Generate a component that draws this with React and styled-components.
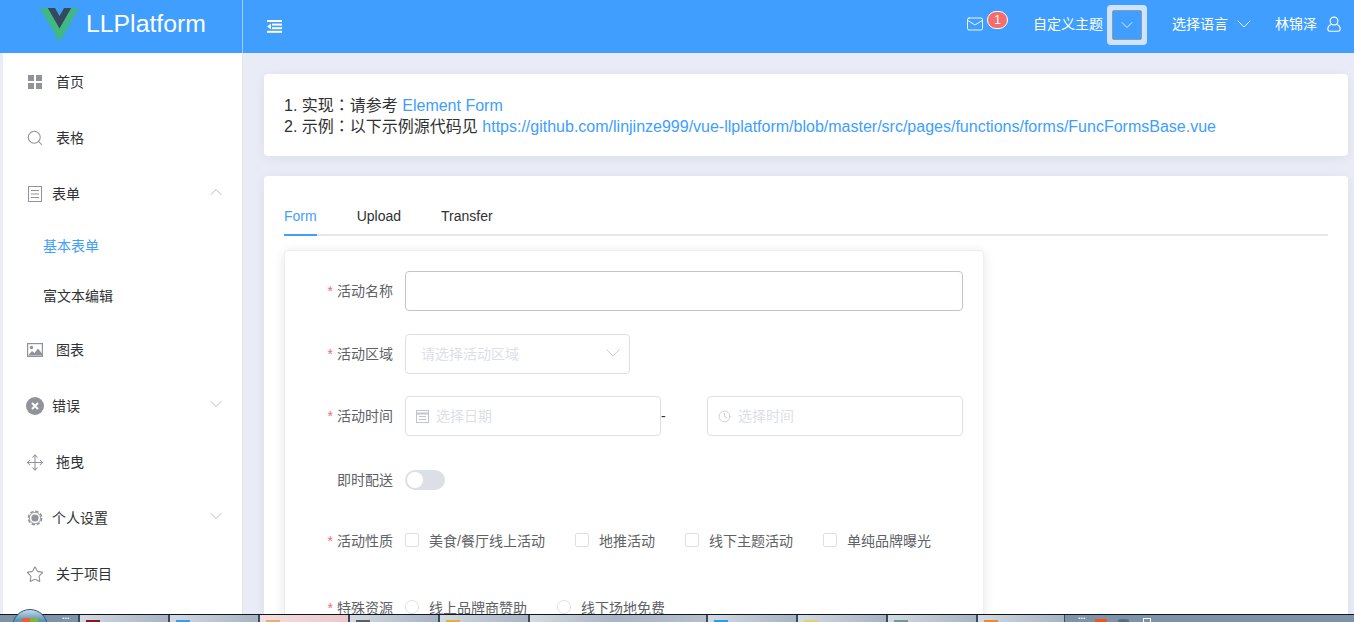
import React from 'react';
import styled, { createGlobalStyle } from 'styled-components';
import { ChevronDown, ChevronUp, Clock, Mail, Move, Search, Star } from 'lucide-react';

const GlobalStyle = createGlobalStyle`
  html, body {
    margin: 0;
    height: 100%;
    overflow: hidden;
  }
  body {
    font-family: "Liberation Sans", "Noto Sans CJK SC", sans-serif;
    font-size: 14px;
    color: #303133;
  }
  * {
    box-sizing: border-box;
  }
`;

const VueLogo = () => (
  <svg width="39" height="34" viewBox="0 0 261.76 226.69">
    <path fill="#41b883" d="M161.096.001l-30.225 52.351L100.647.001H-.005l130.876 226.688L261.747.001z" />
    <path fill="#35495e" d="M161.096.001l-30.225 52.351L100.647.001H52.346l78.525 136.01L209.398.001z" />
  </svg>
);

const FoldIcon = () => (
  <svg width="15" height="13" viewBox="0 0 15 13" fill="#fff">
    <rect x="0" y="0" width="15" height="2" />
    <rect x="5" y="3.6" width="10" height="2" />
    <rect x="5" y="7.2" width="10" height="2" />
    <rect x="0" y="10.8" width="15" height="2" />
    <path d="M4 3.4v6L0 6.4z" />
  </svg>
);

const UserIcon = () => (
  <svg width="14" height="16" viewBox="0 0 14 16" fill="none" stroke="#fff" strokeWidth="1.1">
    <circle cx="7" cy="5" r="3.9" />
    <path d="M4.6 8.2C2.4 9 .8 10.6.8 13c0 1.3.8 2.2 2.2 2.2h8c1.4 0 2.2-.9 2.2-2.2 0-2.4-1.6-4-3.8-4.8" />
  </svg>
);

const GridIcon = () => (
  <svg width="14" height="14" viewBox="0 0 14 14" fill="#909399">
    <rect width="6" height="6" />
    <rect x="8" width="6" height="6" />
    <rect y="8" width="6" height="6" />
    <rect x="8" y="8" width="6" height="6" />
  </svg>
);

const TicketIcon = () => (
  <svg width="14" height="16" viewBox="0 0 14 16" fill="none" stroke="#909399">
    <rect x="0.5" y="0.5" width="13" height="15" />
    <path d="M3 4.5h8M3 8h8M3 11.5h8" />
  </svg>
);

const PictureIcon = () => (
  <svg width="16" height="14" viewBox="0 0 16 14">
    <rect width="16" height="14" fill="#909399" />
    <rect x="1.2" y="1.2" width="13.6" height="11.6" fill="#fff" />
    <circle cx="4.5" cy="4.5" r="1.7" fill="#909399" />
    <path fill="#909399" d="M1 12.5l4-4.5 2.5 2 3.5-4.5 4 5v2z" />
  </svg>
);

const ErrorIcon = () => (
  <svg width="18" height="18" viewBox="0 0 18 18">
    <circle cx="9" cy="9" r="9" fill="#909399" />
    <path d="M6 6l6 6M12 6l-6 6" stroke="#fff" strokeWidth="2" />
  </svg>
);

const GearIcon = () => (
  <svg width="16" height="16" viewBox="0 0 16 16">
    <circle cx="8" cy="8" r="6.6" fill="none" stroke="#909399" strokeWidth="1.6" strokeDasharray="3.4 1.8" />
    <circle cx="8" cy="8" r="5.6" fill="none" stroke="#909399" strokeWidth="0.8" />
    <circle cx="8" cy="8" r="3.6" fill="#909399" />
  </svg>
);

const CalendarIcon = () => (
  <svg width="13" height="13" viewBox="0 0 13 13" fill="none" stroke="#c0c4cc">
    <rect x="0.5" y="0.5" width="12" height="12" />
    <path d="M0.5 3.5h12" strokeWidth="2" />
    <path d="M3 6.5h7M3 9.5h7" />
  </svg>
);

const App = () => (
  <Page>
    <GlobalStyle />
    <Header>
      <Brand>
        <VueLogo />
        <BrandName>LLPlatform</BrandName>
      </Brand>
      <FoldButton>
        <FoldIcon />
      </FoldButton>
      <HeaderRight>
        <MailWrap>
          <Mail size={18} strokeWidth={1.2} />
          <Badge>1</Badge>
        </MailWrap>
        <HeaderText>自定义主题</HeaderText>
        <ThemeSwatch>
          <SwatchInner>
            <ChevronDown size={20} strokeWidth={1} />
          </SwatchInner>
        </ThemeSwatch>
        <LangWrap>
          <HeaderText>选择语言</HeaderText>
          <ChevronDown size={24} strokeWidth={0.9} />
        </LangWrap>
        <UserWrap>
          <HeaderText>林锦泽</HeaderText>
          <UserIcon />
        </UserWrap>
      </HeaderRight>
    </Header>

    <Body>
      <Sidebar>
        <MenuRow>
          <IconSlot><GridIcon /></IconSlot>
          <MenuLabel>首页</MenuLabel>
        </MenuRow>
        <MenuRow>
          <IconSlot><Search size={22} strokeWidth={1.4} color="#909399" /></IconSlot>
          <MenuLabel>表格</MenuLabel>
        </MenuRow>
        <MenuRow>
          <IconSlot><TicketIcon /></IconSlot>
          <MenuLabel $nested>表单</MenuLabel>
          <Arrow><ChevronUp size={20} strokeWidth={1} /></Arrow>
        </MenuRow>
        <SubRow $active>基本表单</SubRow>
        <SubRow>富文本编辑</SubRow>
        <MenuRow>
          <IconSlot><PictureIcon /></IconSlot>
          <MenuLabel>图表</MenuLabel>
        </MenuRow>
        <MenuRow>
          <IconSlot><ErrorIcon /></IconSlot>
          <MenuLabel $nested>错误</MenuLabel>
          <Arrow><ChevronDown size={20} strokeWidth={1} /></Arrow>
        </MenuRow>
        <MenuRow>
          <IconSlot><Move size={19} strokeWidth={1.4} color="#909399" /></IconSlot>
          <MenuLabel>拖曳</MenuLabel>
        </MenuRow>
        <MenuRow>
          <IconSlot><GearIcon /></IconSlot>
          <MenuLabel $nested>个人设置</MenuLabel>
          <Arrow><ChevronDown size={20} strokeWidth={1} /></Arrow>
        </MenuRow>
        <MenuRow>
          <IconSlot><Star size={19} strokeWidth={1.5} color="#909399" /></IconSlot>
          <MenuLabel>关于项目</MenuLabel>
        </MenuRow>
      </Sidebar>

      <Main>
        <NoteCard>
          <div>1. 实现<FullColon>：</FullColon>请参考 <NoteLink>Element Form</NoteLink></div>
          <div>
            2. 示例<FullColon>：</FullColon>以下示例源代码见{' '}
            <NoteLink>https://github.com/linjinze999/vue-llplatform/blob/master/src/pages/functions/forms/FuncFormsBase.vue</NoteLink>
          </div>
        </NoteCard>

        <TabCard>
          <TabBar>
            <Tab $active>Form</Tab>
            <Tab>Upload</Tab>
            <Tab>Transfer</Tab>
          </TabBar>
          <FormBox>
            <FormRow $gap={23}>
              <FieldLabel $required>活动名称</FieldLabel>
              <TextInput $focused />
            </FormRow>
            <FormRow $gap={22}>
              <FieldLabel $required>活动区域</FieldLabel>
              <TextInput $width={225}>
                <Placeholder $left={15}>请选择活动区域</Placeholder>
                <SelectArrow><ChevronDown size={24} strokeWidth={0.9} /></SelectArrow>
              </TextInput>
            </FormRow>
            <FormRow $gap={24}>
              <FieldLabel $required>活动时间</FieldLabel>
              <TextInput $width={256}>
                <InputIcon><CalendarIcon /></InputIcon>
                <Placeholder>选择日期</Placeholder>
              </TextInput>
              <Dash>-</Dash>
              <TextInput $width={256}>
                <InputIcon><Clock size={15} strokeWidth={1.4} color="#c0c4cc" /></InputIcon>
                <Placeholder>选择时间</Placeholder>
              </TextInput>
            </FormRow>
            <FormRow $gap={21}>
              <FieldLabel>即时配送</FieldLabel>
              <SwitchTrack><SwitchKnob /></SwitchTrack>
            </FormRow>
            <FormRow $gap={27}>
              <FieldLabel $required>活动性质</FieldLabel>
              <Choice $gap={30}><CheckBox />美食/餐厅线上活动</Choice>
              <Choice $gap={30}><CheckBox />地推活动</Choice>
              <Choice $gap={30}><CheckBox />线下主题活动</Choice>
              <Choice><CheckBox />单纯品牌曝光</Choice>
            </FormRow>
            <FormRow $gap={22}>
              <FieldLabel $required>特殊资源</FieldLabel>
              <Choice $gap={30}><RadioDot />线上品牌商赞助</Choice>
              <Choice><RadioDot />线下场地免费</Choice>
            </FormRow>
          </FormBox>
        </TabCard>
      </Main>
    </Body>

    <Taskbar>
      <StartOrb />
      <TrayDots $left={62}>...</TrayDots>
      <WindowButton $tab="#8a1a1a" />
      <WindowButton $tab="#3d9be0" />
      <WindowButton $tab="#e8b070" $hot />
      <WindowButton $tab="#5a6068" />
      <WindowButton $tab="#e3b040" />
      <WindowButton $split $width={178} />
      <WindowButton $tab="#2f9ae8" />
      <WindowButton $tab="#e6cf6a" />
      <WindowButton $tab="#6f9a98" />
      <WindowButton $tab="#e98a3a" $width={88} />
      <Tray>
        <TrayDots $left={13}>...</TrayDots>
        <TrayFlag />
        <TrayCircle />
        <TraySquare />
      </Tray>
    </Taskbar>
  </Page>
);

export default App;

const Page = styled.div`
  display: flex;
  flex-direction: column;
  height: 622px;
  width: 1354px;
  overflow: hidden;
  background: #e9ecf6;
`;

const Header = styled.header`
  display: flex;
  align-items: center;
  flex: none;
  height: 53px;
  background: #409eff;
  color: #fff;
`;

const Brand = styled.div`
  display: flex;
  align-items: center;
  gap: 7px;
  width: 243px;
  height: 100%;
  padding: 0 0 4px 40px;
  border-right: 1px solid #a9cdf2;
`;

const BrandName = styled.span`
  margin-bottom: 2px;
  font-size: 24.8px;
  line-height: 30px;
`;

const FoldButton = styled.div`
  display: flex;
  margin-left: 24px;
`;

const HeaderRight = styled.div`
  display: flex;
  align-items: center;
  margin-left: auto;
  padding: 0 13px 5px 0;
`;

const MailWrap = styled.div`
  position: relative;
  display: flex;
  margin-right: 49px;
`;

const Badge = styled.span`
  position: absolute;
  top: -4px;
  left: 21px;
  width: 21px;
  height: 18px;
  border: 1px solid #fff;
  border-radius: 9px;
  background: #f56c6c;
  font-size: 12px;
  line-height: 16px;
  text-align: center;
`;

const HeaderText = styled.span`
  font-size: 14px;
  line-height: 20px;
  color: #fff;
`;

const ThemeSwatch = styled.div`
  display: flex;
  width: 40px;
  height: 40px;
  margin: 2px 25px 0 4px;
  padding: 5px;
  border-radius: 4px;
  background: #cfe4fb;
`;

const SwatchInner = styled.div`
  display: flex;
  align-items: center;
  justify-content: center;
  width: 100%;
  border: 1px solid #8f9bab;
  border-radius: 2px;
  background: #409eff;
`;

const LangWrap = styled.div`
  display: flex;
  align-items: center;
  gap: 4px;
  margin-right: 19px;
`;

const UserWrap = styled.div`
  display: flex;
  align-items: center;
  gap: 10px;
`;

const Body = styled.div`
  display: flex;
  flex: 1;
  min-height: 0;
  padding-left: 3px;
`;

const Sidebar = styled.nav`
  flex: none;
  width: 240px;
  padding-top: 1px;
  border-right: 1px solid #e6e6e6;
  background: #fff;
`;

const MenuRow = styled.div`
  display: flex;
  align-items: center;
  height: 56px;
  padding: 0 16px 0 23px;
`;

const IconSlot = styled.span`
  display: flex;
  align-items: center;
  justify-content: center;
  flex: none;
  width: 18px;
`;

const MenuLabel = styled.span`
  margin-left: ${(p) => (p.$nested ? 8 : 12)}px;
  line-height: 20px;
  color: #303133;
`;

const Arrow = styled.span`
  display: flex;
  margin: 0 0 5px auto;
  color: #a8abb2;
`;

const SubRow = styled.div`
  display: flex;
  align-items: center;
  height: 50px;
  margin-top: -2px;
  margin-bottom: 2px;
  padding-left: 40px;
  color: ${(p) => (p.$active ? '#409eff' : '#303133')};
`;

const Main = styled.main`
  flex: 1;
  min-width: 0;
  padding: 21px 6px 0 21px;
`;

const NoteCard = styled.section`
  height: 82px;
  padding: 21px 20px 0;
  border-radius: 4px;
  background: #fff;
  box-shadow: 0 2px 12px rgba(0, 0, 0, 0.06);
  font-size: 16px;
  line-height: 21px;
  color: #303133;
`;

/* the Traditional face centres its full-width colon in the cell */
const FullColon = styled.span`
  font-family: "Noto Sans CJK TC", sans-serif;
  line-height: 0;
`;

const NoteLink = styled.a`
  color: #409eff;
`;

const TabCard = styled.section`
  height: 520px;
  margin-top: 20px;
  padding: 20px;
  border-radius: 4px;
  background: #fff;
  box-shadow: 0 2px 12px rgba(0, 0, 0, 0.06);
`;

const TabBar = styled.div`
  display: flex;
  height: 40px;
  margin-bottom: 14px;
  border-bottom: 2px solid #e4e7ed;
`;

const Tab = styled.div`
  height: 40px;
  margin-right: 40px;
  border-bottom: 2px solid ${(p) => (p.$active ? '#409eff' : 'transparent')};
  line-height: 40px;
  color: ${(p) => (p.$active ? '#409eff' : '#303133')};
`;

const FormBox = styled.div`
  width: 700px;
  height: 440px;
  padding: 20px 20px 0 0;
  border: 1px solid #ebeef5;
  border-radius: 4px;
  box-shadow: 0 2px 12px rgba(0, 0, 0, 0.1);
`;

const FormRow = styled.div`
  display: flex;
  align-items: center;
  height: 40px;
  margin-bottom: ${(p) => p.$gap}px;
`;

const FieldLabel = styled.label`
  flex: none;
  width: 120px;
  padding: 0 12px 2px 0;
  color: #606266;
  text-align: right;

  &::before {
    content: ${(p) => (p.$required ? '"*"' : 'none')};
    margin-right: 4px;
    color: #f56c6c;
  }
`;

const TextInput = styled.div`
  position: relative;
  display: flex;
  align-items: center;
  flex: ${(p) => (p.$width ? 'none' : 1)};
  width: ${(p) => (p.$width ? `${p.$width}px` : 'auto')};
  height: 40px;
  padding-left: 10px;
  border: 1px solid ${(p) => (p.$focused ? '#c0c4cc' : '#dcdfe6')};
  border-radius: 4px;
  background: #fff;
`;

const Placeholder = styled.span`
  margin: 0 0 2px ${(p) => (p.$left ? p.$left - 10 : 7)}px;
  color: #dcdfe6;
`;

const InputIcon = styled.span`
  display: flex;
  justify-content: center;
  width: 13px;
`;

const SelectArrow = styled.span`
  position: absolute;
  top: 6px;
  right: 4px;
  display: flex;
  color: #c0c4cc;
`;

const Dash = styled.span`
  flex: none;
  width: 46px;
  color: #303133;
`;

const SwitchTrack = styled.span`
  display: block;
  width: 40px;
  height: 20px;
  padding: 2px;
  border-radius: 10px;
  background: #dcdfe6;
`;

const SwitchKnob = styled.span`
  display: block;
  width: 16px;
  height: 16px;
  border-radius: 50%;
  background: #fff;
`;

const Choice = styled.label`
  display: flex;
  align-items: center;
  gap: 10px;
  margin-right: ${(p) => p.$gap || 0}px;
  padding-bottom: 2px;
  color: #606266;
`;

const CheckBox = styled.span`
  display: block;
  width: 14px;
  height: 14px;
  border: 1px solid #dcdfe6;
  border-radius: 2px;
  background: #fff;
`;

const RadioDot = styled(CheckBox)`
  border-radius: 50%;
`;

const Taskbar = styled.footer`
  position: relative;
  display: flex;
  flex: none;
  height: 8px;
  padding-left: 78px;
  overflow: visible;
  border-top: 1px solid #10181f;
  background: #7f93a8;
`;

const StartOrb = styled.span`
  position: absolute;
  top: -6px;
  left: 12px;
  width: 36px;
  height: 36px;
  border: 1px solid #2c5a78;
  border-radius: 50%;
  background:
    linear-gradient(90deg, #e8603a 0 50%, #7fb640 50%) 50% 8px / 16px 10px no-repeat,
    linear-gradient(#c5dcea, #5f93b4 30%);
`;

const TrayDots = styled.span`
  position: absolute;
  top: -4px;
  left: ${(p) => p.$left}px;
  color: #fff;
  font-size: 9px;
  font-weight: bold;
  line-height: 10px;
  letter-spacing: 0;
`;

const buttonFill = (p) => {
  if (p.$hot) return 'linear-gradient(90deg, #f3dfe0, #edc6c9)';
  if (p.$split) return 'linear-gradient(90deg, #d3dae2, #a6b3c2 49.5%, #a9b5c4 50%, #b4bfcb)';
  return 'linear-gradient(90deg, #d3dae2, #a6b3c2)';
};

const WindowButton = styled.span`
  position: relative;
  flex: none;
  width: ${(p) => p.$width || 90}px;
  height: 8px;
  overflow: hidden;
  border-left: 2px solid #3b4a5a;
  background: ${buttonFill};

  &::after {
    content: '';
    position: absolute;
    top: 5px;
    left: 6px;
    display: ${(p) => (p.$tab ? 'block' : 'none')};
    width: 14px;
    height: 3px;
    background: ${(p) => p.$tab};
  }
`;

const Tray = styled.div`
  position: relative;
  display: flex;
  align-items: flex-end;
  flex: 1;
  height: 8px;
  border-left: 1px solid #3b4a5a;
`;

const TrayFlag = styled.span`
  position: absolute;
  top: 4px;
  left: 30px;
  width: 12px;
  height: 3px;
  background: #f0561c;
`;

const TrayCircle = styled.span`
  position: absolute;
  top: 4px;
  left: 53px;
  width: 11px;
  height: 3px;
  border-radius: 50% 50% 0 0;
  background: #5a6a80;
`;

const TraySquare = styled.span`
  position: absolute;
  top: 3px;
  left: 78px;
  width: 8px;
  height: 5px;
  border: 1px solid #fff;
`;
